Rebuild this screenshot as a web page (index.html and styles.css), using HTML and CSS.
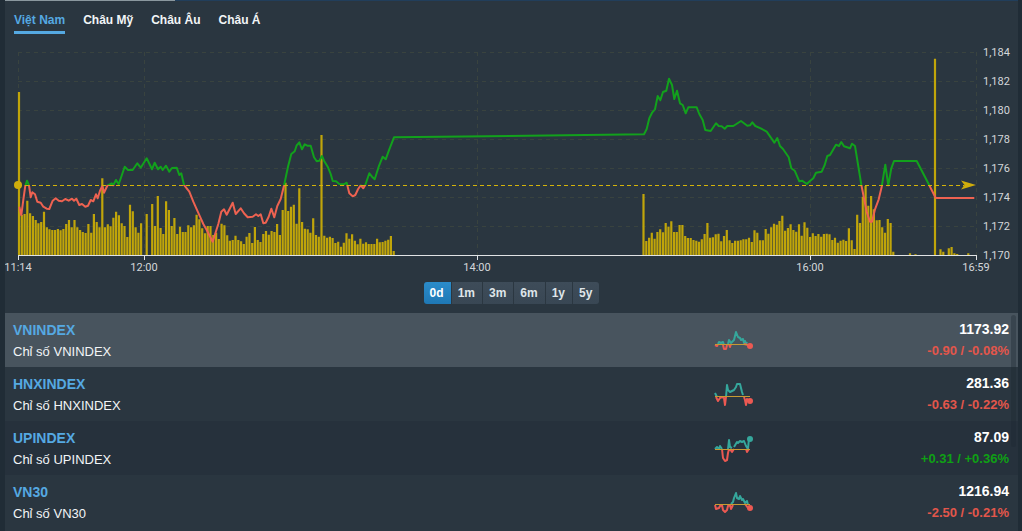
FILE: index.html
```html
<!DOCTYPE html>
<html lang="vi">
<head>
<meta charset="utf-8">
<title>Chỉ số thị trường</title>
<link rel="stylesheet" href="styles.css">
</head>
<body>
<main class="panel">
  <div class="top-strip"><span class="top-strip-active"></span></div>
  <nav class="tabs">
    <button class="tab tab-active" type="button">Việt Nam</button>
    <button class="tab" type="button">Châu Mỹ</button>
    <button class="tab" type="button">Châu Âu</button>
    <button class="tab" type="button">Châu Á</button>
  </nav>
  <svg class="chart" id="chart" viewBox="5 38 1013 238" role="img" aria-label="VNINDEX">
    <defs>
      <clipPath id="above"><rect x="0" y="40" width="1020" height="145"/></clipPath>
      <clipPath id="below"><rect x="0" y="185" width="1020" height="75"/></clipPath>
    </defs>
    <g id="grid" class="grid"></g>
    <path id="bars" class="bars"/>
    <path id="line-up" class="line line-up" clip-path="url(#above)"/>
    <path id="line-down" class="line line-down" clip-path="url(#below)"/>
    <path class="reference" d="M18 185.500H964"/>
    <circle class="marker" cx="18" cy="185" r="4"/>
    <path class="marker" d="M961 180.500L976 185L961 189.500L964.500 185Z"/>
    <path class="axis" d="M18 255.500H977M18.500 256v4M144.500 256v4M477.500 256v4M810.500 256v4M976.500 256v4"/>
    <g class="labels labels-time">
      <text x="18" y="271">11:14</text>
      <text x="144" y="271">12:00</text>
      <text x="477" y="271">14:00</text>
      <text x="810" y="271">16:00</text>
      <text x="976" y="271">16:59</text>
    </g>
    <g class="labels" id="values"></g>
  </svg>
  <div class="ranges">
    <button class="range range-active" type="button">0d</button>
    <button class="range" type="button">1m</button>
    <button class="range" type="button">3m</button>
    <button class="range" type="button">6m</button>
    <button class="range" type="button">1y</button>
    <button class="range" type="button">5y</button>
  </div>
  <div class="list-wrap">
    <ul class="list">
      <li class="row row-selected">
        <div class="names"><div class="code">VNINDEX</div><div class="desc">Chỉ số VNINDEX</div></div>
        <svg class="spark" viewBox="0 0 40 28">
          <path class="spark-up" d="M4 16l1-2 2 1 2-1 1 3M14 16l1-4 2 3 1-1 2-2 2-8 2 5 2 1 1 2 2-1 1 4 1-2 1 3 1-2"/>
          <path class="spark-down" d="M1 17l2 1 1-1M9 17l1 4 2 0 1-4M15 16l1 3 1-3M30 16l4 1"/>
          <path class="spark-base" d="M1 16.500h35"/><circle class="dot-down" cx="36" cy="18" r="3"/>
        </svg>
        <div class="figures"><div class="value">1173.92</div><div class="change down">-0.90 / -0.08%</div></div>
      </li>
      <li class="row">
        <div class="names"><div class="code">HNXINDEX</div><div class="desc">Chỉ số HNXINDEX</div></div>
        <svg class="spark" viewBox="0 0 40 28">
          <path class="spark-up" d="M1 11l2 4M12 15l1-12 1 5 2 2 2-1 2-1 2-3 1-3h3l2 8 1 3"/>
          <path class="spark-down" d="M2 15l2 4 2-3 2-1 2 1 1 7 1-8M30 15l1 3 1 5 1-6 2 2"/>
          <path class="spark-base" d="M1 14.500h35"/><circle class="dot-down" cx="36" cy="19" r="3"/>
        </svg>
        <div class="figures"><div class="value">281.36</div><div class="change down">-0.63 / -0.22%</div></div>
      </li>
      <li class="row">
        <div class="names"><div class="code">UPINDEX</div><div class="desc">Chỉ số UPINDEX</div></div>
        <svg class="spark" viewBox="0 0 40 28">
          <path class="spark-up" d="M1 13l2-2 2 2 1-3 2 3M14 13l1-9 1 7 2 1M20 11l3-5 1 1 2-2 2 1 2-1 2 5 2 3 1-11"/>
          <path class="spark-down" d="M8 13l1 9 2 3 2-1 1-7 1-4M16 13l2 3 2-3M32 13l1 3 2-3"/>
          <path class="spark-base" d="M1 13.500h35"/><circle class="dot-up" cx="36" cy="3" r="3"/>
        </svg>
        <div class="figures"><div class="value">87.09</div><div class="change up">+0.31 / +0.36%</div></div>
      </li>
      <li class="row">
        <div class="names"><div class="code">VN30</div><div class="desc">Chỉ số VN30</div></div>
        <svg class="spark" viewBox="0 0 40 28">
          <path class="spark-up" d="M17 14l2-2 1-4 2-5 1 5 2 1 1-3 2 4 1-1 2 4 2-2 1 4"/>
          <path class="spark-down" d="M1 15l1 4 3-1 1-2 2-1 1 5 2 2 2-2 1-4 2-1 1 4 2-4M31 14l3 4"/>
          <path class="spark-base" d="M1 14.500h35"/><circle class="dot-down" cx="36" cy="18" r="3"/>
        </svg>
        <div class="figures"><div class="value">1216.94</div><div class="change down">-2.50 / -0.21%</div></div>
      </li>
    </ul>
    <span class="thumb"></span>
  </div>
</main>
<script src="chart.js"></script>
</body>
</html>
```

FILE: chart.js
```js
// Volume bars: start minute and bar heights in thirds of a unit.
const volumes = [
  [0, [489,120,123,163,125,117,105,95,99,130,83,77,75,75,78,74,78,93,105,83,105,83,75,69,66,93,67,123,99,83,230,83,92,86,112,130,119,95,87,54,151,131,83,67,95,0,123,0,153,87,177,81,63,161,135,87,111,63,85,69,69,89,83,89,121,107]],
  [66, [80,65,87,87,60,67,48,94,89,59,43,45,58,45,41,33,55,66,36,84,45,39,63,72,61,72,69,93,60,135,217,132,145,151,94,200,99,79,77,67,110,60,55,360,58,52,55,51,36,40,25,37,65,49,62,43,32,49,34,38,33,33,33,49,38,39,43,46,57,12]],
  [225, [183,42,52,67,49,69,77,68,96,85,101,69,69,90,90,57,51,51,45,43,40,47,63,96,52,53,62,64,41,57,75,44,36,43,43,44,47,47,52,39,74,67,44,44,78,64,83,94,91,102,118,73,81,92,75,70,92,58,98,82,54,65,57,63,55,63,64]],
  [292, [62,45,52,37,43,46,42,80,44,18,121,96,175,207,148,177,137,104,105,83,67,108,96,10]],
  [321, [5,0,2]], [330, [589,0,17,10,0,20,24,5,3]], [342, [5]]
];

// Price line: origin of each stretch, then x,y pairs in thirds of a unit.
const prices = [
  [0, 140, "58,200 64,226 70,180 76,137 81,122 87,136 92,172 97,157 105,163 112,185 122,188 130,200 140,206 148,207 158,182 167,175 176,182 186,184 196,177 206,182 216,176 222,182 229,176 238,195 246,192 256,200 264,197 272,180 280,184 288,163 293,175 300,152 307,138 312,158 322,137 335,130 340,136 348,120 356,133 364,110 374,80 384,90 398,90 412,70 422,83 440,55 456,88 464,68 474,88 482,80 488,90 498,77 508,95 516,84 530,83 538,105 544,100 552,135 568,155 580,185 600,230"],
  [200, 120, "0,290 10,312 20,330 38,365 55,312 64,275 72,268 80,284 98,248 107,282 122,265 132,280 143,292 158,290 168,283 175,288 182,283 190,310 197,308 206,290 214,266 223,292 232,258 242,237 252,197 264,140 274,102 284,94 290,76 298,67 306,88 314,73 322,77 332,77 342,112 350,124 358,122 366,108 372,122 384,142 392,162 398,183 408,184 418,192 432,193 440,188 448,220 458,229 466,225 474,208 482,196 490,205 496,195 508,160 516,170 524,178 536,140 548,110 557,118 568,88 582,52"],
  [630, 60, "42,223 50,207 58,175 67,157 75,148 83,108 91,121 99,96 109,92 117,56 126,75 133,117 141,92 150,130 158,135 167,160 175,142 200,142 208,162 218,180 226,210 242,213 258,190 266,198 275,199 284,206 292,198 310,198 333,183 352,197 360,196 367,187 376,198 392,205 410,215 422,232 433,248 442,234 450,258 459,267 476,292 484,325 494,332 508,364 517,362 530,372 541,362 550,355 558,338 575,335"],
  [820, 40, "14,375 22,348 30,345 48,314 57,318 64,306 72,319 90,325 96,311 105,318 124,434 132,475 140,515 150,545 156,545 165,508 176,478 185,440 196,374 205,436 214,385 222,363 290,363 328,436 347,474 463,474"]
];

const STEP = 957.6 / 345;
const BASE = 255;

let bars = "";
for (const [start, heights] of volumes) {
  heights.forEach((h, i) => {
    if (h) bars += `M${(19 + (start + i) * STEP).toFixed(1)} ${BASE}V${(BASE - h / 3).toFixed(1)}`;
  });
}
document.getElementById("bars").setAttribute("d", bars);

const points = prices.flatMap(([ox, oy, list]) =>
  list.split(" ").map(pair => {
    const [x, y] = pair.split(",").map(Number);
    return `${(ox + x / 3).toFixed(1)} ${(oy + y / 3).toFixed(1)}`;
  })
);
const line = "M" + points.join("L");
document.getElementById("line-up").setAttribute("d", line);
document.getElementById("line-down").setAttribute("d", line);

let grid = "";
let labels = "";
for (let i = 0; i < 8; i++) {
  const y = 52 + i * 29;
  if (i < 7) grid += `<path d="M18 ${y + 0.5}H976"/>`;
  labels += `<text x="983" y="${y + 4}">1,${184 - i * 2}</text>`;
}
for (const x of [18, 144, 477, 810, 976]) grid += `<path d="M${x + 0.5} 52V${BASE}"/>`;
document.getElementById("grid").innerHTML = grid;
document.getElementById("values").innerHTML = labels;
```

FILE: styles.css
```css
* { box-sizing: border-box; }
body {
  margin: 0;
  padding: 0 4px 0 5px;
  background: #202c36;
  font-family: "Liberation Sans", Arial, sans-serif;
  color: #f2f5f7;
}
button { font: inherit; color: inherit; border: 0; background: none; }
.panel { background: #2a3640; overflow: hidden; }
.top-strip { height: 1px; background: #213e5b; }
.top-strip-active { display: block; width: 170px; height: 1px; background: #8b989f; }
.tabs { display: flex; gap: 18px; padding: 9px 9px 0; }
.tab {
  height: 24px;
  padding: 2px 0 2px;
  border-bottom: 3px solid transparent;
  font-size: 12px;
  font-weight: bold;
  line-height: 17px;
}
.tab-active { color: #55a9e2; border-color: #55a9e2; }

.chart { display: block; width: 100%; height: auto; margin-top: 4px; }
.grid { fill: none; stroke: #39433f; stroke-width: 1; stroke-dasharray: 4 4; }
.bars { fill: none; stroke: #c0a50a; stroke-width: 2.2; }
.line { fill: none; stroke-width: 2; stroke-linejoin: round; }
.line-up { stroke: #12a11c; }
.line-down { stroke: #ee6251; }
.reference { stroke: #d4b30a; stroke-width: 1; stroke-dasharray: 4 3; }
.marker { fill: #d0ad0b; }
.axis { fill: none; stroke: #e0e3e5; stroke-width: 1; }
.labels { fill: #d3d7da; font: 11px Roboto, sans-serif; }
.labels-time { text-anchor: middle; }

.ranges { display: flex; justify-content: center; height: 37px; padding: 6px 0 9px; }
.range {
  padding: 0 7px 0 6px;
  border-right: 1px solid #2b3741;
  background: linear-gradient(#3e4c59, #394754);
  font-size: 12px;
  font-weight: bold;
  line-height: 22px;
  color: #dfe5e9;
}
.range-active { background: linear-gradient(#2b8cca, #1f78b5); color: #fff; border-radius: 3px 0 0 3px; }
.range:last-child { border-right: 0; border-radius: 0 3px 3px 0; }

.list-wrap { position: relative; }
.list { margin: 0; padding: 0; list-style: none; }
.row {
  display: grid;
  grid-template-columns: 11fr 40px 4fr;
  height: 54px;
  padding: 6px 9px 6px 8px;
  background: #2a3640;
}
.row:nth-child(odd) { background: #26313c; }
.row-selected:nth-child(odd) { background: #48545e; }
.row:last-child { height: 56px; }
.code { font-size: 14px; font-weight: bold; line-height: 22px; color: #55a9e2; }
.desc { font-size: 13px; line-height: 21px; }
.spark { width: 40px; height: 28px; margin-top: 9px; fill: none; stroke-width: 2; stroke-linejoin: round; }
.spark-up { stroke: #35a79c; }
.spark-down { stroke: #ec5952; }
.spark-base { stroke: #c79a32; stroke-width: 1; }
.dot-up { fill: #35a79c; }
.dot-down { fill: #ec5952; }
.figures { text-align: right; }
.value { font-size: 14px; font-weight: bold; line-height: 21px; color: #fff; }
.change { font-size: 13px; font-weight: bold; line-height: 22px; }
.down { color: #e3564b; }
.up { color: #0fa014; }
.thumb {
  position: absolute;
  top: 2px;
  right: 2px;
  width: 5px;
  height: 132px;
  border-radius: 3px;
  background: rgb(30 40 50 / 35%);
}
```
